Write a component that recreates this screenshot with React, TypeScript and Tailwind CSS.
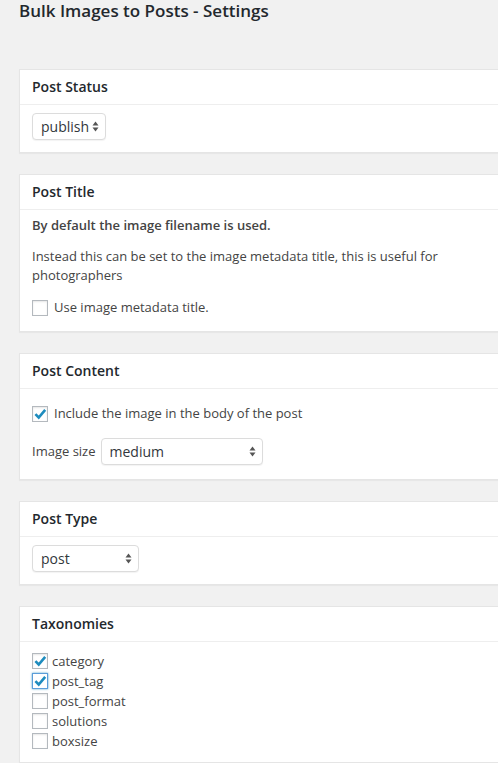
import React from "react";

function Arrows() {
  return (
    <svg width="7" height="11" viewBox="0 0 7 11" className="shrink-0">
      <path d="M3.5 0.5 L6.5 4.5 L0.5 4.5 Z" fill="#555" />
      <path d="M3.5 10.5 L6.5 6.5 L0.5 6.5 Z" fill="#555" />
    </svg>
  );
}

function Select({ value, width }: { value: string; width: string }) {
  return (
    <div
      className={`${width} h-[27px] flex items-center justify-between pl-[8px] pr-[6px] bg-white border border-[#dcdcdc] rounded-[4px] shadow-[0_1px_1px_rgba(0,0,0,0.05)] text-[14px] text-[#32373c]`}
    >
      <span className="leading-[20px]">{value}</span>
      <Arrows />
    </div>
  );
}

function Checkbox({ checked, focused }: { checked?: boolean; focused?: boolean }) {
  return (
    <span
      className={
        focused
          ? "w-[16px] h-[16px] shrink-0 bg-white border border-[#5b9dd9] shadow-[0_0_2px_rgba(30,140,190,0.8)] flex items-center justify-center"
          : "w-[16px] h-[16px] shrink-0 bg-white border border-[#b4b9be] shadow-[inset_0_1px_2px_rgba(0,0,0,0.1)] flex items-center justify-center"
      }
    >
      {checked && (
        <svg width="14" height="14" viewBox="0 0 14 14">
          <path
            d="M2.4 7.2 L5.7 10.5 L12.2 2.8"
            fill="none"
            stroke="#1e8cbe"
            strokeWidth="2.6"
            strokeLinecap="butt"
            strokeLinejoin="miter"
          />
        </svg>
      )}
    </span>
  );
}

function Card({ title, children }: { title: string; children: React.ReactNode }) {
  return (
    <div className="bg-white border border-[#e5e5e5] shadow-[0_1px_1px_rgba(0,0,0,0.04)]">
      <div className="px-3 py-[7px] leading-[20px] text-[14px] font-semibold text-[#23282d] border-b border-[#eeeeee]">
        {title}
      </div>
      {children}
    </div>
  );
}

export default function App() {
  return (
    <div className="min-h-screen bg-[#f1f1f1] overflow-hidden font-['Open_Sans',sans-serif] text-[13px] text-[#444]">
      <div className="pl-[19px]">
        <h1 className="text-[17px] leading-[22px] font-semibold text-[#23282d]">
          Bulk Images to Posts - Settings
        </h1>
        <div className="mt-[47px] w-[540px] flex flex-col gap-[21px]">
          <Card title="Post Status">
            <div className="px-3 pt-[8px] pb-[12px]">
              <Select value="publish" width="w-[74px]" />
            </div>
          </Card>

          <Card title="Post Title">
            <div className="px-3 pt-[6px] pb-[14px] leading-[19px]">
              <p className="font-semibold">By default the image filename is used.</p>
              <p className="mt-[12px] w-[420px]">
                Instead this can be set to the image metadata title, this is useful for photographers
              </p>
              <label className="mt-[13px] flex items-center gap-[6px] h-[19px]">
                <Checkbox />
                <span>Use image metadata title.</span>
              </label>
            </div>
          </Card>

          <Card title="Post Content">
            <div className="px-3 pt-[15px] pb-[14px] leading-[19px]">
              <label className="flex items-center gap-[6px] h-[19px]">
                <Checkbox checked />
                <span>Include the image in the body of the post</span>
              </label>
              <div className="mt-[15px] flex items-center gap-[5px]">
                <span>Image size</span>
                <Select value="medium" width="w-[162px]" />
              </div>
            </div>
          </Card>

          <Card title="Post Type">
            <div className="px-3 pt-[8px] pb-[12px]">
              <Select value="post" width="w-[107px]" />
            </div>
          </Card>

          <Card title="Taxonomies">
            <div className="px-3 pt-[9px] pb-[11px] flex flex-col">
              <label className="flex items-center gap-[4px] h-[20px] leading-[19px]">
                <Checkbox checked />
                <span>category</span>
              </label>
              <label className="flex items-center gap-[4px] h-[20px] leading-[19px]">
                <Checkbox checked focused />
                <span>post_tag</span>
              </label>
              <label className="flex items-center gap-[4px] h-[20px] leading-[19px]">
                <Checkbox />
                <span>post_format</span>
              </label>
              <label className="flex items-center gap-[4px] h-[20px] leading-[19px]">
                <Checkbox />
                <span>solutions</span>
              </label>
              <label className="flex items-center gap-[4px] h-[20px] leading-[19px]">
                <Checkbox />
                <span>boxsize</span>
              </label>
            </div>
          </Card>
        </div>
      </div>
    </div>
  );
}
